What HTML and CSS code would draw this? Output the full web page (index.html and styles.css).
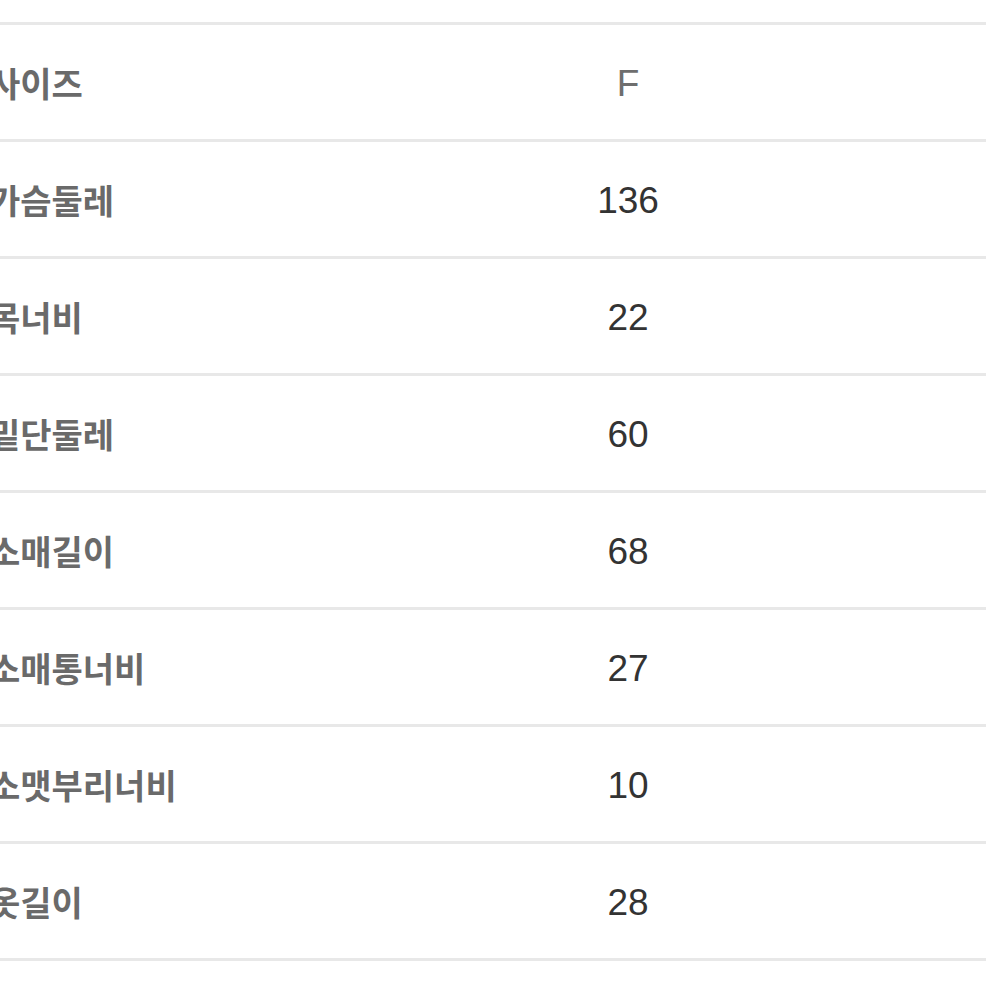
FILE: index.html
```html
<!DOCTYPE html>
<html lang="ko">
<head>
<meta charset="utf-8">
<link rel="stylesheet" href="styles.css">
</head>
<body>
<div class="table">
  <div class="row"><div class="label">사이즈</div><div class="value light">F</div></div>
  <div class="row"><div class="label">가슴둘레</div><div class="value">136</div></div>
  <div class="row"><div class="label">목너비</div><div class="value">22</div></div>
  <div class="row"><div class="label">밑단둘레</div><div class="value">60</div></div>
  <div class="row"><div class="label">소매길이</div><div class="value">68</div></div>
  <div class="row"><div class="label">소매통너비</div><div class="value">27</div></div>
  <div class="row"><div class="label">소맷부리너비</div><div class="value">10</div></div>
  <div class="row"><div class="label">옷길이</div><div class="value">28</div></div>
</div>
</body>
</html>
```
FILE: styles.css
```css
html, body {
  margin: 0;
  padding: 0;
  background: #ffffff;
  overflow: hidden;
}
.table {
  padding-top: 22px;
  border-bottom: 3px solid #e8e8e8;
  width: 986px;
}
.row {
  display: grid;
  grid-template-columns: 270px 1fr;
  align-items: center;
  height: 114px;
  border-top: 3px solid #e8e8e8;
}
.label {
  margin-left: -11px;
  font-family: "Noto Sans CJK KR", "Noto Sans", sans-serif;
  font-weight: 600;
  font-size: 34px;
  letter-spacing: 0;
  color: #6a6a6a;
  white-space: nowrap;
}
.value {
  padding-top: 4px;
  text-align: center;
  font-family: "Liberation Sans", Arial, sans-serif;
  font-size: 37px;
  color: #333333;
}
.value.light {
  color: #6e6e6e;
}
```
